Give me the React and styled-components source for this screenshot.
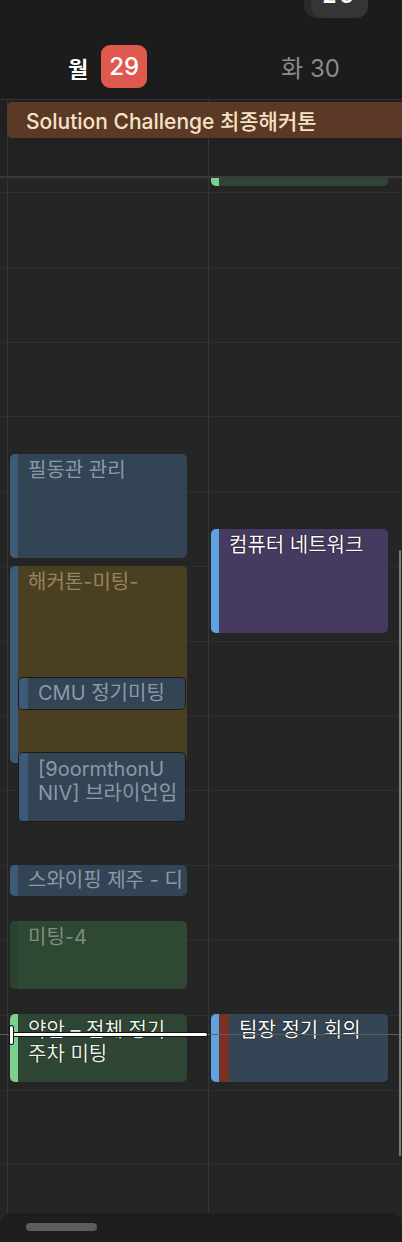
import React from "react";
import styled, { createGlobalStyle } from "styled-components";

const GlobalStyle = createGlobalStyle`
  html, body { margin: 0; padding: 0; background: #1c1c1c; }
  body { font-family: "Inter", "Noto Sans CJK KR", sans-serif; }
`;

const HOUR = 74.8;

const palettes = {
  blueDim: { bg: "#334555", accent: "#3d5a77", text: "#8a99a7" },
  yellow: { bg: "#4a3f21", accent: "#3d5a77", text: "#918562" },
  greenDim: { bg: "#2f4834", accent: "#2b4230", text: "#7b8f7d" },
  green: { bg: "#304634", accent: "#7ccf8c", text: "#eaf6ea" },
  purple: { bg: "#463a60", accent: "#5ea2de", text: "#ffffff" },
  blue: { bg: "#344656", accent: "#5ea2de", text: "#ffffff" },
};

const Page = styled.div`
  width: 402px;
  height: 1242px;
  background: #252525;
  overflow: hidden;
  position: relative;
  display: flex;
  flex-direction: column;
`;

const Header = styled.div`
  height: 99px;
  box-sizing: border-box;
  padding-top: 34px;
  background: #1c1c1c;
  display: grid;
  grid-template-columns: 7px 201px 201px;
  align-items: center;
  position: relative;
`;

const FloatPill = styled.div`
  position: absolute;
  top: 0;
  left: 311px;
  width: 57px;
  height: 18px;
  background: #353535;
  border-radius: 0 0 12px 12px;
  box-shadow: -7px 0 0 #2a2a2a;
  overflow: hidden;
  color: #fff;
  font-weight: 700;
  font-size: 22px;
  text-align: center;
  line-height: 0;
  letter-spacing: 3px;
`;

const PillText = styled.span`
  display: block;
  margin-top: -5px;
`;

const DayLabel = styled.div`
  grid-column: ${(p) => p.$col};
  display: flex;
  align-items: center;
  justify-content: center;
  gap: 13px;
  color: ${(p) => (p.$today ? "#ffffff" : "#8b8b8b")};
  font-size: 24px;
`;

const Weekday = styled.span`
  font-weight: ${(p) => (p.$today ? 700 : 400)};
  font-size: ${(p) => (p.$today ? "22px" : "24px")};
  ${(p) => (p.$today ? "text-shadow: 0 0 1px #000;" : "margin-left: 4px;")}
`;

const DateBadge = styled.span`
  display: inline-flex;
  align-items: center;
  justify-content: center;
  width: 46px;
  height: 43px;
  border-radius: 9px;
  background: #e0594f;
  color: #fff;
  font-size: 24px;
  font-weight: 500;
`;

const AllDay = styled.div`
  height: 76px;
  background: #212121;
  border-top: 1px solid #333;
  border-bottom: 2px solid #3a3a3a;
  display: grid;
  grid-template-columns: 7px 201px 1fr;
  grid-template-rows: 1fr;
`;

const Lane = styled.div`
  grid-row: 1;
  grid-column: ${(p) => p.$col};
  border-left: ${(p) => (p.$first ? "none" : "1px solid #353535")};
`;

const AllDayEvent = styled.div`
  grid-row: 1;
  grid-column: 2 / -1;
  align-self: start;
  margin-top: 2px;
  height: 36px;
  display: flex;
  align-items: center;
  background: #5a3a26;
  border-radius: 5px 0 0 5px;
  overflow: hidden;
  z-index: 1;
  color: #f7e2c5;
  font-size: 21px;
  font-weight: 500;
  white-space: nowrap;
`;

const AllDayTitle = styled.span`
  padding-left: 10px;
`;

const Body = styled.div`
  flex: 1;
  position: relative;
  display: grid;
  grid-template-columns: 7px 201px 1fr;
  background-image: repeating-linear-gradient(
    to bottom,
    #2f2f2f 0,
    #2f2f2f 1px,
    transparent 1px,
    transparent ${HOUR}px
  );
  background-position: 0 14px;
  background-repeat: no-repeat;
  background-size: 100% calc(100% - 14px);
`;

const DayColumn = styled.div`
  position: relative;
  border-left: 1px solid #353535;
`;

const EventBox = styled.div`
  position: absolute;
  display: flex;
  background: ${(p) => palettes[p.$kind].bg};
  border-radius: 5px;
  overflow: hidden;
  box-sizing: border-box;
  border: ${(p) => (p.$outlined ? "1px solid #1a1a1a" : "none")};
`;

const Accent = styled.div`
  flex: none;
  width: ${(p) => p.$w || 8}px;
  background: ${(p) => p.$color};
`;

const EventTitle = styled.div`
  flex: 1;
  min-width: 0;
  padding: ${(p) => (p.$short ? "3px" : "4px")} 4px 0 10px;
  font-size: 20px;
  line-height: 24px;
  color: ${(p) => palettes[p.$kind].text};
  word-break: ${(p) => (p.$keepAll ? "keep-all" : "break-all")};
  white-space: ${(p) => (p.$short ? "nowrap" : p.$pre ? "pre" : "normal")};
  overflow: hidden;
  text-shadow: ${(p) => (p.$bright ? "0 0 1px #000, 0 0 1px #000" : "none")};
`;

const NowRule = styled.div`
  position: absolute;
  left: 0;
  right: 0;
  top: 856px;
  height: 1px;
  background: #5e5e5e;
  z-index: 3;
`;

const NowBar = styled.div`
  position: absolute;
  left: 10px;
  width: 197px;
  top: 855px;
  height: 3px;
  background: #fff;
  border-radius: 2px;
  box-shadow: 0 0 0 1px #111;
  z-index: 4;
`;

const NowCap = styled.div`
  position: absolute;
  left: 10px;
  top: 848px;
  width: 3px;
  height: 18px;
  background: #fff;
  border-radius: 2px;
  box-shadow: 0 0 0 1px #111;
  z-index: 4;
`;

const ScrollIndicator = styled.div`
  position: absolute;
  right: 1px;
  top: 372px;
  width: 2px;
  height: 606px;
  border-radius: 1px;
  background: #7a7a7a;
  z-index: 5;
`;

const BottomBar = styled.div`
  height: 29px;
  background: #1e1e1e;
  border-radius: 12px 12px 0 0;
  padding: 10px 0 0 26px;
  box-sizing: border-box;
`;

const HomePill = styled.div`
  width: 71px;
  height: 8px;
  border-radius: 4px;
  background: #5c5c5c;
`;

const mondayEvents = [
  { title: "필동관 관리", kind: "blueDim", top: 276, height: 104 },
  { title: "해커톤-미팅-", kind: "yellow", top: 388, height: 197 },
  { title: "CMU 정기미팅", kind: "blueDim", top: 499, height: 33, left: 10, width: 168, outlined: true, short: true },
  { title: "[9oormthonU\nNIV] 브라이언임", kind: "blueDim", top: 574, height: 70, left: 10, width: 168, outlined: true, pre: true },
  { title: "스와이핑 제주 - 디", kind: "blueDim", top: 687, height: 31, short: true },
  { title: "미팅-4", kind: "greenDim", top: 743, height: 68 },
  { title: "약안 – 전체 정기 주차 미팅", kind: "green", top: 836, height: 68, bright: true, keepAll: true },
];

const tuesdayEvents = [
  { title: "", kind: "green", top: 0, height: 8, flatTop: true },
  { title: "컴퓨터 네트워크", kind: "purple", top: 351, height: 104, bright: true },
  { title: "팀장 정기 회의", kind: "blue", top: 836, height: 68, bright: true, extra: "#7b3026" },
];

const CalendarEvent = ({ ev }) => {
  const p = palettes[ev.kind];
  return (
    <EventBox
      $kind={ev.kind}
      $outlined={ev.outlined}
      style={{
        top: ev.top,
        height: ev.height,
        left: ev.left ?? 2,
        width: ev.width ?? 177,
        borderTopLeftRadius: ev.flatTop ? 0 : undefined,
        borderTopRightRadius: ev.flatTop ? 0 : undefined,
      }}
    >
      <Accent $color={p.accent} $w={ev.outlined ? 9 : 8} />
      {ev.extra && <Accent $color={ev.extra} $w={10} />}
      {ev.title && (
        <EventTitle
          $kind={ev.kind}
          $short={ev.short}
          $bright={ev.bright}
          $keepAll={ev.keepAll}
          $pre={ev.pre}
        >
          {ev.title}
        </EventTitle>
      )}
    </EventBox>
  );
};

export default function App() {
  return (
    <>
      <GlobalStyle />
      <Page>
        <Header>
          <FloatPill>
            <PillText>26</PillText>
          </FloatPill>
          <DayLabel $col={2} $today>
            <Weekday $today>월</Weekday>
            <DateBadge>29</DateBadge>
          </DayLabel>
          <DayLabel $col={3}>
            <Weekday>화 30</Weekday>
          </DayLabel>
        </Header>

        <AllDay>
          <Lane $col={1} $first />
          <Lane $col={2} />
          <Lane $col={3} />
          <AllDayEvent>
            <Accent $color="#5ea2de" $w={9} />
            <AllDayTitle>Solution Challenge 최종해커톤</AllDayTitle>
          </AllDayEvent>
        </AllDay>

        <Body>
          <div />
          <DayColumn>
            {mondayEvents.map((ev) => (
              <CalendarEvent key={ev.title} ev={ev} />
            ))}
          </DayColumn>
          <DayColumn>
            {tuesdayEvents.map((ev, i) => (
              <CalendarEvent key={i} ev={ev} />
            ))}
          </DayColumn>
          <NowRule />
          <NowBar />
          <NowCap />
          <ScrollIndicator />
        </Body>

        <BottomBar>
          <HomePill />
        </BottomBar>
      </Page>
    </>
  );
}
